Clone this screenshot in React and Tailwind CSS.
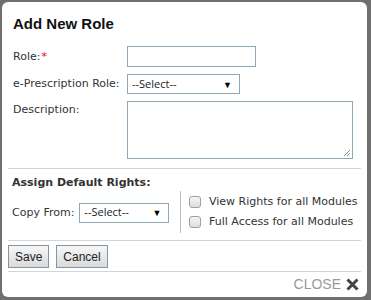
const label = "text-[11px] leading-[16px] text-[#333] [font-family:'DejaVu_Sans',Verdana,sans-serif]"
const selText = "text-[11px] text-[#222] [font-family:'Open_Sans',sans-serif]"

function FakeSelect({ width }) {
  return (
    <div className={`${width} h-[20px] border border-[#8fa6b5] bg-white flex items-center justify-between pl-[4px] pr-[7px]`}>
      <span className={selText}>--Select--</span>
      <span className="text-[9px] leading-none text-black">▼</span>
    </div>
  )
}

function Check({ children }) {
  return (
    <div className="flex items-center h-[20px]">
      <span className="w-[12px] h-[12px] rounded-[3px] border border-[#a0a0a0] bg-gradient-to-b from-[#f4f4f4] to-[#dedede]" />
      <span className={`${label} ml-[8px]`}>{children}</span>
    </div>
  )
}

export default function App() {
  return (
    <div className="w-[371px] h-[300px] bg-[#6f6f6f] pt-[2px] pl-[2px] overflow-hidden">
      <div className="w-[365px] h-[295px] bg-white rounded-[6px] overflow-hidden">
        <h2 className="pl-[11px] pt-[12px] h-[40px] text-[15px] leading-[20px] font-bold text-[#111] [font-family:'Liberation_Sans',Arial,sans-serif]">
          Add New Role
        </h2>

        <div className="pl-[11px] flex flex-col gap-[7px] mt-[4px]">
          <div className="flex items-center">
            <span className={`${label} w-[114px]`}>
              Role:<span className="text-[#e00] ml-[1px]">*</span>
            </span>
            <div className="w-[129px] h-[21px] border border-[#8fa6b5] bg-white" />
          </div>
          <div className="flex items-center">
            <span className={`${label} w-[114px]`}>e-Prescription Role:</span>
            <FakeSelect width="w-[113px]" />
          </div>
          <div className="flex items-start">
            <span className={`${label} w-[114px] pt-[1px]`}>Description:</span>
            <div className="relative w-[226px] h-[58px] border border-[#8fa6b5] bg-white">
              <svg className="absolute right-[1px] bottom-[1px]" width="9" height="9" viewBox="0 0 9 9">
                <path d="M8 2L2 8M8 5L5 8" stroke="#888" strokeWidth="1" />
              </svg>
            </div>
          </div>
        </div>

        <div className="mx-[6px] mt-[9px] border-t border-[#d4d4d4]" />

        <div className={`${label} pl-[10px] mt-[6px] font-bold text-[#111]`}>Assign Default Rights:</div>

        <div className="flex pl-[10px]">
          <div className="flex items-center w-[168px] pt-[1px]">
            <span className={label}>Copy From:</span>
            <div className="ml-[5px]">
              <FakeSelect width="w-[90px]" />
            </div>
          </div>
          <div className="w-px h-[42px] bg-[#bdbdbd]" />
          <div className="flex flex-col pl-[8px] pt-[1px]">
            <Check>View Rights for all Modules</Check>
            <Check>Full Access for all Modules</Check>
          </div>
        </div>

        <div className="mx-[6px] mt-[7px] border-t border-[#d4d4d4]" />

        <div className="flex gap-[7px] pl-[6px] mt-[4px]">
          {['Save', 'Cancel'].map((t) => (
            <button
              key={t}
              className="h-[23px] px-[6px] border border-[#8297a6] bg-gradient-to-b from-[#f7f7f7] to-[#dadada] text-[12px] text-[#222] [font-family:'Liberation_Sans',Arial,sans-serif]"
            >
              {t}
            </button>
          ))}
        </div>

        <div className="mx-[6px] mt-[3px] border-t border-[#d4d4d4]" />

        <div className="flex items-center justify-end pr-[8px] mt-[4px] h-[16px]">
          <span className="text-[14px] leading-[16px] text-[#9a9a9a] [font-family:'Liberation_Sans',Arial,sans-serif]">CLOSE</span>
          <svg className="ml-[5px]" width="13" height="13" viewBox="0 0 13 13">
            <path d="M1.5 1.5L11.5 11.5M11.5 1.5L1.5 11.5" stroke="#444" strokeWidth="3" />
          </svg>
        </div>
      </div>
    </div>
  )
}
